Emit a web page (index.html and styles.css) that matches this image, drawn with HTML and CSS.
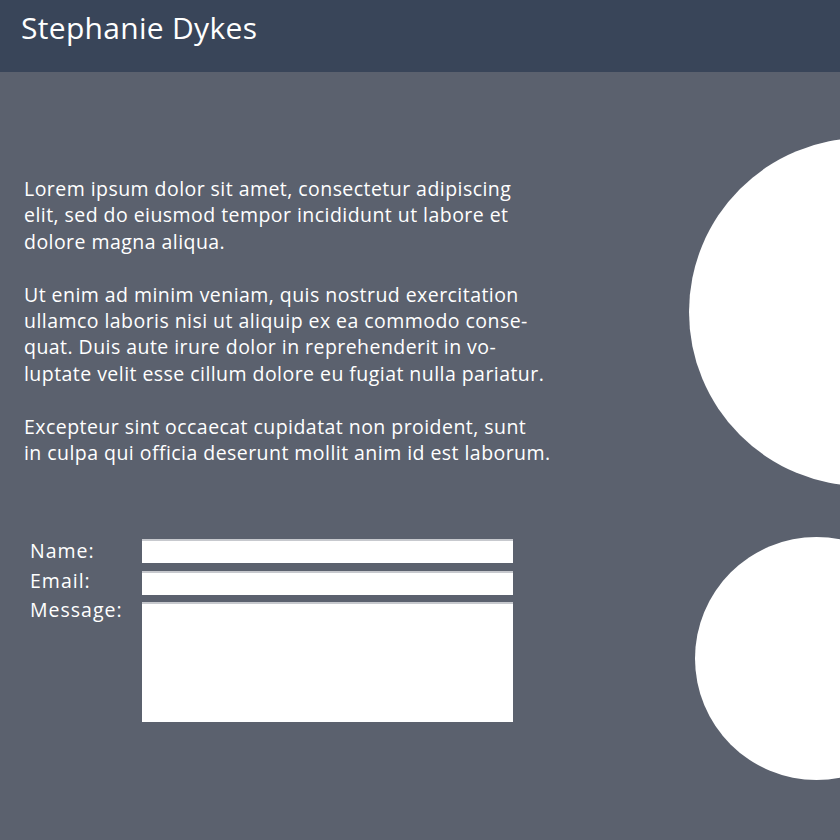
FILE: index.html
```html
<!DOCTYPE html>
<html>
<head>
<meta charset="utf-8">
<link rel="stylesheet" href="styles.css">
</head>
<body>
<header class="top">
  <h1 class="title">Stephanie Dykes</h1>
</header>
<main class="main">
  <section class="content">
    <div class="text">
      <p>Lorem ipsum dolor sit amet, consectetur adipiscing<br>elit, sed do eiusmod tempor incididunt ut labore et<br>dolore magna aliqua.</p>
      <p>Ut enim ad minim veniam, quis nostrud exercitation<br>ullamco laboris nisi ut aliquip ex ea commodo conse-<br>quat. Duis aute irure dolor in reprehenderit in vo-<br>luptate velit esse cillum dolore eu fugiat nulla pariatur.</p>
      <p>Excepteur sint occaecat cupidatat non proident, sunt<br>in culpa qui officia deserunt mollit anim id est laborum.</p>
    </div>
    <form class="form">
      <div class="labels">
        <label class="lbl" for="n">Name:</label>
        <label class="lbl" for="e">Email:</label>
        <label class="lbl" for="m">Message:</label>
      </div>
      <div class="fields">
        <input class="field" id="n" type="text">
        <input class="field" id="e" type="text">
        <textarea class="field area" id="m"></textarea>
      </div>
    </form>
  </section>
  <svg class="circles" width="160" height="768" viewBox="680 72 160 768" aria-hidden="true">
    <circle cx="863" cy="312" r="174" fill="#ffffff"/>
    <circle cx="816.5" cy="658.5" r="121.5" fill="#ffffff"/>
  </svg>
</main>
</body>
</html>
```
FILE: styles.css
```css
html, body {
  margin: 0;
  padding: 0;
}
body {
  background: #5b616e;
  font-family: "Open Sans", "Lato", sans-serif;
  color: #ffffff;
  width: 840px;
  height: 840px;
  overflow: hidden;
}
.top {
  background: #394559;
  height: 72px;
  display: flex;
  align-items: center;
  padding-left: 21px;
  box-sizing: border-box;
}
.title {
  margin: 0 0 16px 0;
  font-weight: 400;
  font-size: 30px;
  letter-spacing: 0.3px;
  line-height: 1;
}
.main {
  position: relative;
  height: 768px;
  overflow: hidden;
}
.content {
  padding: 104px 0 0 24px;
}
.text p {
  margin: 0 0 26.4px 0;
  font-size: 19.5px;
  letter-spacing: 0.45px;
  line-height: 26.4px;
}
.form {
  margin: 73px 0 0 6px;
  display: flex;
  align-items: flex-start;
}
.labels {
  width: 112px;
  display: flex;
  flex-direction: column;
  margin-top: -3px;
}
.lbl {
  font-size: 19.5px;
  letter-spacing: 1px;
  line-height: 29.5px;
}
.fields {
  display: flex;
  flex-direction: column;
  gap: 7.5px;
}
.field {
  display: block;
  box-sizing: border-box;
  width: 371px;
  height: 24px;
  margin: 0;
  padding: 0;
  border: none;
  border-top: 2px solid #c7c9ce;
  background: #ffffff;
  outline: none;
}
.area {
  height: 120px;
  resize: none;
}
.circles {
  position: absolute;
  left: 680px;
  top: 0;
}
```
